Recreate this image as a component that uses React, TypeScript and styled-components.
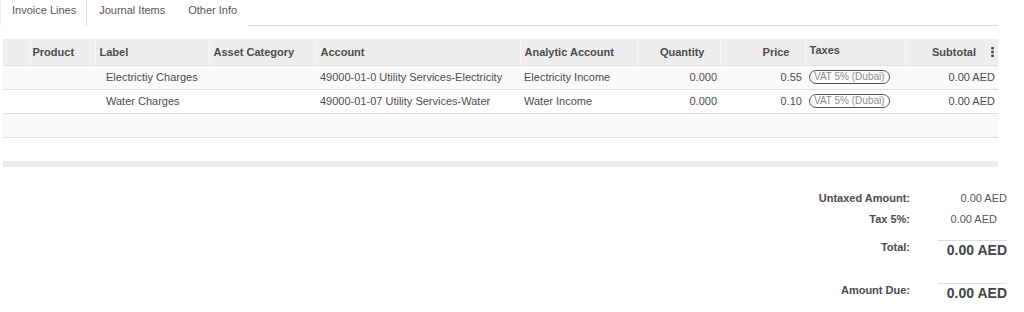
import React from 'react';
import styled, { createGlobalStyle } from 'styled-components';

type Line = {
  label: string;
  account: string;
  analytic: string;
  quantity: string;
  price: string;
  tax: string;
  subtotal: string;
};

const lines: Line[] = [
  {
    label: 'Electrictiy Charges',
    account: '49000-01-0 Utility Services-Electricity',
    analytic: 'Electricity Income',
    quantity: '0.000',
    price: '0.55',
    tax: 'VAT 5% (Dubai)',
    subtotal: '0.00 AED',
  },
  {
    label: 'Water Charges',
    account: '49000-01-07 Utility Services-Water',
    analytic: 'Water Income',
    quantity: '0.000',
    price: '0.10',
    tax: 'VAT 5% (Dubai)',
    subtotal: '0.00 AED',
  },
];

const widths = [27, 65, 114, 107, 204, 117, 83, 85, 100, 93];

const App: React.FC = () => {
  return (
    <Page>
      <GlobalStyle />
      <TabBar>
        <Tab $active>Invoice Lines</Tab>
        <Tab>Journal Items</Tab>
        <Tab>Other Info</Tab>
      </TabBar>

      <Table>
        <colgroup>
          {widths.map((w, i) => (
            <col key={i} style={{ width: w }} />
          ))}
        </colgroup>
        <thead>
          <tr>
            <HeadCell $first />
            <HeadCell $tight>Product</HeadCell>
            <HeadCell>Label</HeadCell>
            <HeadCell>Asset Category</HeadCell>
            <HeadCell>Account</HeadCell>
            <HeadCell>Analytic Account</HeadCell>
            <HeadCell $align="right">Quantity</HeadCell>
            <HeadCell $align="right">Price</HeadCell>
            <HeadCell $top>Taxes</HeadCell>
            <HeadCell $align="right" $last>
              Subtotal
              <Kebab width="3" height="10" viewBox="0 0 3 10">
                <rect x="0.2" y="0" width="2.6" height="2.4" rx="0.6" fill="#444" />
                <rect x="0.2" y="3.8" width="2.6" height="2.4" rx="0.6" fill="#444" />
                <rect x="0.2" y="7.6" width="2.6" height="2.4" rx="0.6" fill="#444" />
              </Kebab>
            </HeadCell>
          </tr>
        </thead>
        <tbody>
          {lines.map((l, i) => (
            <Row key={i} $striped={i % 2 === 0}>
              <Cell />
              <Cell />
              <Cell $indent>{l.label}</Cell>
              <Cell />
              <Cell>{l.account}</Cell>
              <Cell>{l.analytic}</Cell>
              <Cell $align="right">{l.quantity}</Cell>
              <Cell $align="right">{l.price}</Cell>
              <Cell>
                <TaxTag>{l.tax}</TaxTag>
              </Cell>
              <Cell $align="right">{l.subtotal}</Cell>
            </Row>
          ))}
          <Row $striped>
            <Cell colSpan={10} />
          </Row>
          <Row $last>
            <Cell colSpan={10} />
          </Row>
        </tbody>
        <tfoot>
          <tr>
            <FootCell colSpan={10} />
          </tr>
        </tfoot>
      </Table>

      <Totals>
        <TotalLabel>Untaxed Amount:</TotalLabel>
        <TotalValue>0.00 AED</TotalValue>
        <TotalLabel>Tax 5%:</TotalLabel>
        <TotalValue $inset>0.00 AED</TotalValue>
        <TotalLabel $big>Total:</TotalLabel>
        <TotalValue $big>
          <BigAmount>0.00 AED</BigAmount>
        </TotalValue>
        <TotalLabel $big $due>Amount Due:</TotalLabel>
        <TotalValue $big $due>
          <BigAmount>0.00 AED</BigAmount>
        </TotalValue>
      </Totals>
    </Page>
  );
};

const GlobalStyle = createGlobalStyle`
  html, body {
    margin: 0;
    padding: 0;
    background: #ffffff;
  }
  body {
    font-family: "Liberation Sans", Arial, Helvetica, sans-serif;
    font-size: 11px;
    color: #4c4c4c;
  }
`;

const Page = styled.div`
  width: 1024px;
  height: 312px;
  overflow: hidden;
  background: #ffffff;
`;

const TabBar = styled.div`
  width: 998px;
  height: 26px;
  box-sizing: border-box;
  display: flex;
  align-items: stretch;
  border-bottom: 1px solid #dddddd;
`;

const Tab = styled.div<{ $active?: boolean }>`
  box-sizing: border-box;
  height: 26px;
  padding: 3px 10px 0 11px;
  line-height: 14px;
  color: #555555;
  border-left: 1px solid ${(p) => (p.$active ? '#eeeeee' : 'transparent')};
  border-right: 1px solid ${(p) => (p.$active ? '#dddddd' : 'transparent')};
  background: #ffffff;
  margin-bottom: -1px;
  ${(p) => (p.$active ? 'border-bottom: 1px solid #ffffff;' : '')}
`;

const Table = styled.table`
  width: 995px;
  margin: 13px 0 0 3px;
  border-collapse: collapse;
  table-layout: fixed;
`;

const HeadCell = styled.th<{
  $align?: 'left' | 'right';
  $first?: boolean;
  $last?: boolean;
  $top?: boolean;
  $tight?: boolean;
}>`
  height: 26px;
  padding: 0 ${(p) => (p.$last ? '4px' : p.$align === 'right' ? '15px' : '4px')} 0
    ${(p) => (p.$tight ? '2px' : '4px')};
  background: #eeeeee;
  border-bottom: 1px solid #e0e0e0;
  border-left: ${(p) => (p.$first ? 'none' : '1px solid #f7f7f7')};
  text-align: ${(p) => p.$align ?? 'left'};
  vertical-align: ${(p) => (p.$top ? 'top' : 'middle')};
  padding-top: ${(p) => (p.$top ? '5px' : '0')};
  box-sizing: border-box;
  font-weight: bold;
  color: #4c4c4c;
  white-space: nowrap;
  overflow: hidden;
`;

const Kebab = styled.svg`
  display: inline-block;
  margin-left: 15px;
  vertical-align: -1px;
`;

const Row = styled.tr<{ $striped?: boolean; $last?: boolean }>`
  background: ${(p) => (p.$striped ? '#fafafa' : '#ffffff')};

  > td {
    border-bottom: ${(p) => (p.$last ? 'none' : '1px solid #dddddd')};
    height: 24px;
  }
`;

const Cell = styled.td<{ $align?: 'left' | 'right'; $indent?: boolean }>`
  box-sizing: border-box;
  padding: 0 ${(p) => (p.$align === 'right' ? '3px' : '4px')} 0
    ${(p) => (p.$indent ? '11px' : '4px')};
  text-align: ${(p) => p.$align ?? 'left'};
  vertical-align: middle;
  color: #4c4c4c;
  white-space: nowrap;
  overflow: hidden;
`;

const TaxTag = styled.span`
  display: inline-block;
  box-sizing: border-box;
  height: 14px;
  line-height: 11px;
  padding: 0 4px;
  border: 1.5px solid #555555;
  border-radius: 8px;
  font-size: 10px;
  color: #8e8e8e;
  vertical-align: middle;
`;

const FootCell = styled.td`
  height: 6px;
  padding: 0;
  background: #ebebeb;
`;

const Totals = styled.div`
  display: grid;
  grid-template-columns: 910px 97px;
  margin-top: 21px;
`;

const TotalLabel = styled.div<{ $big?: boolean; $due?: boolean }>`
  text-align: right;
  font-weight: bold;
  color: #4c4c4c;
  line-height: ${(p) => (p.$big ? '14px' : '21px')};
  margin-top: ${(p) => (p.$due ? '21px' : p.$big ? '10px' : '0')};
`;

const TotalValue = styled.div<{ $big?: boolean; $due?: boolean; $inset?: boolean }>`
  text-align: right;
  color: #555555;
  line-height: 21px;
  padding-right: ${(p) => (p.$inset ? '10px' : '0')};
  margin-top: ${(p) => (p.$due ? '21px' : p.$big ? '10px' : '0')};
`;

const BigAmount = styled.span`
  display: inline-block;
  border-top: 1px solid #dddddd;
  padding-left: 9px;
  font-size: 14px;
  font-weight: bold;
  line-height: 19px;
  color: #444444;
`;

export default App;
